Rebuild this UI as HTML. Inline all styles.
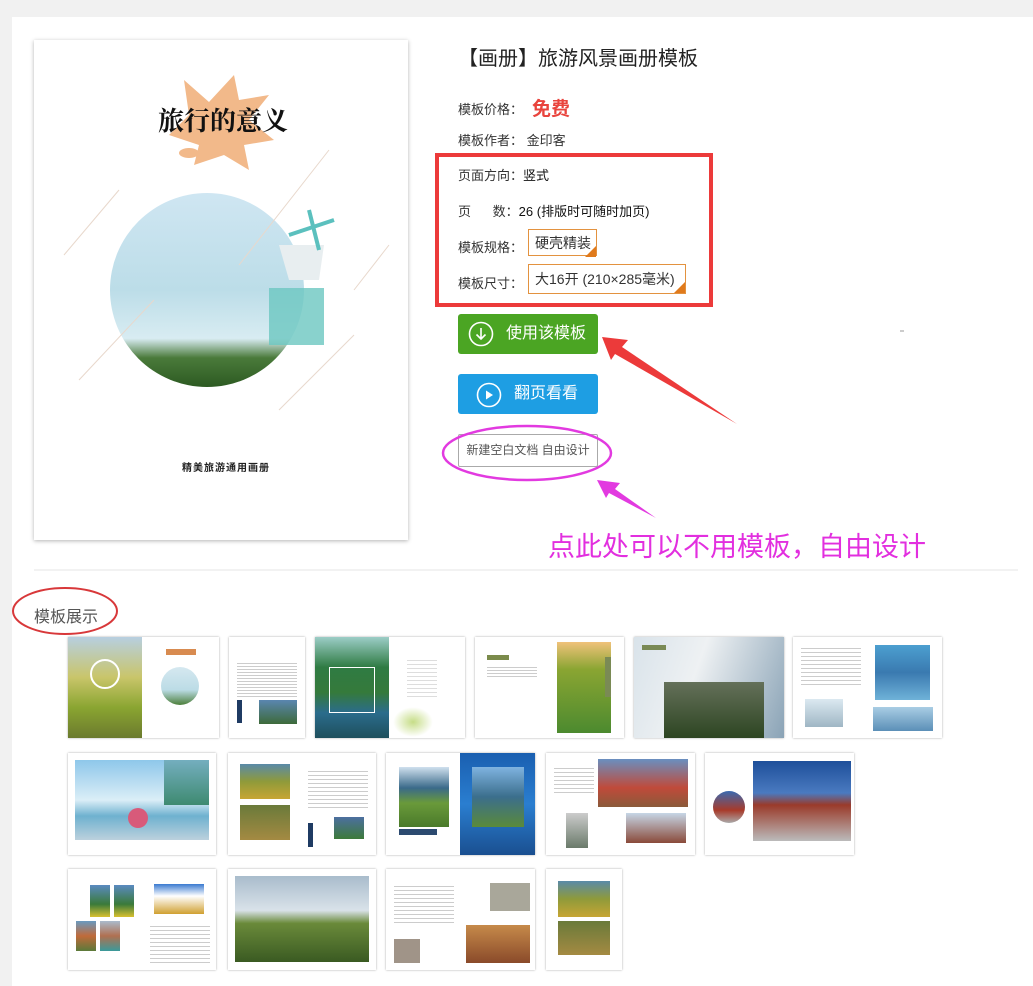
<!DOCTYPE html>
<html><head><meta charset="utf-8"><style>
body{margin:0;width:1033px;height:986px;background:#f1f1f1;font-family:"Liberation Sans","Noto Sans CJK SC",sans-serif;position:relative;overflow:hidden}
.a{position:absolute}
.panel{left:12px;top:17px;width:1021px;height:969px;background:#fff}
.lab{font-size:13px;color:#333}
.t{position:absolute;box-shadow:0 0 2px rgba(0,0,0,.35);background:#fff;overflow:hidden}
.t div{position:absolute}
</style></head><body>
<div class="a panel"></div>
<!-- cover -->
<div class="a" style="left:34px;top:40px;width:374px;height:500px;background:#fff;box-shadow:0 1px 4px rgba(0,0,0,.3)"></div>
<svg class="a" style="left:34px;top:40px" width="374" height="500">
<defs><linearGradient id="cg" x1="0" y1="0" x2="0" y2="1"><stop offset="0" stop-color="#cfe6f2"/><stop offset=".5" stop-color="#bcdde8"/><stop offset=".75" stop-color="#d8ecf2"/><stop offset=".85" stop-color="#4a7a3a"/><stop offset="1" stop-color="#2d5a22"/></linearGradient></defs>
<path d="M150 40 L175 62 L200 35 L205 60 L235 55 L215 80 L240 100 L210 105 L215 130 L190 115 L160 125 L165 105 L135 95 L155 75Z" fill="#f2b98a"/>
<ellipse cx="155" cy="113" rx="10" ry="5" fill="#f2b98a"/>
<circle cx="173" cy="250" r="97" fill="url(#cg)"/>
<path d="M245 205 L255 240 L285 240 L290 205Z" fill="#e8eef0"/>
<path d="M235 248 L290 248 L290 305 L235 305Z" fill="#6cc7c0" opacity=".8"/>
<path d="M255 195 L300 180 M275 170 L285 210" stroke="#5bc0be" stroke-width="4"/>
<g stroke="#e8d8cc" stroke-width="1"><line x1="30" y1="215" x2="85" y2="150"/><line x1="45" y1="340" x2="120" y2="260"/><line x1="205" y1="225" x2="295" y2="110"/><line x1="245" y1="370" x2="320" y2="295"/><line x1="320" y1="250" x2="355" y2="205"/></g>
<text x="124" y="90" font-family="Liberation Serif,Noto Serif CJK SC,serif" font-weight="bold" font-size="26" fill="#111">旅行的意义</text>
<text x="148" y="431" font-size="10" font-weight="bold" fill="#222" letter-spacing="1">精美旅游通用画册</text>
</svg>
<!-- info -->
<div class="a" style="left:458px;top:42px;font-size:20px;color:#222">【画册】旅游风景画册模板</div>
<div class="a lab" style="left:458px;top:99px">模板价格：</div>
<div class="a" style="left:532px;top:94px;font-size:19px;font-weight:bold;color:#e9443d">免费</div>
<div class="a lab" style="left:458px;top:130px">模板作者： 金印客</div>
<div class="a" style="left:435px;top:153px;width:270px;height:146px;border:4px solid #ec3a3a"></div>
<div class="a lab" style="left:458px;top:165px">页面方向：<span style="color:#111">竖式</span></div>
<div class="a lab" style="left:458px;top:201px">页&nbsp;&nbsp;&nbsp;&nbsp;&nbsp;&nbsp;数：<span style="color:#111">26 (排版时可随时加页)</span></div>
<div class="a lab" style="left:458px;top:237px">模板规格：</div>
<div class="a" style="left:528px;top:229px;height:27px;border:1px solid #e3923f;font-size:14px;line-height:27px;padding-left:6px;color:#333;box-sizing:border-box;width:69px">硬壳精装</div>
<div class="a" style="left:585px;top:246px;width:0;height:0;border-left:11px solid transparent;border-bottom:11px solid #e07a1c"></div>
<div class="a lab" style="left:458px;top:273px">模板尺寸：</div>
<div class="a" style="left:528px;top:264px;width:158px;height:30px;border:1px solid #e3923f;box-sizing:border-box;font-size:14px;line-height:29px;padding-left:6px;color:#333;white-space:nowrap;overflow:hidden">大16开 (210×285毫米)</div>
<div class="a" style="left:674px;top:282px;width:0;height:0;border-left:11px solid transparent;border-bottom:11px solid #e07a1c"></div>
<!-- buttons -->
<div class="a" style="left:458px;top:314px;width:140px;height:40px;background:#4ba523;border-radius:3px;color:#fff;font-size:16px;line-height:40px"><svg class="a" style="left:10px;top:7px" width="26" height="26"><circle cx="13" cy="13" r="11.5" fill="none" stroke="#fff" stroke-width="1.6"/><path d="M13 7v11M8.5 13.5l4.5 4.5 4.5-4.5" fill="none" stroke="#fff" stroke-width="1.6"/></svg><span class="a" style="left:48px">使用该模板</span></div>
<div class="a" style="left:458px;top:374px;width:140px;height:40px;background:#1e9ee3;border-radius:3px;color:#fff;font-size:16px;line-height:40px"><svg class="a" style="left:18px;top:8px" width="26" height="26"><circle cx="13" cy="13" r="11.5" fill="none" stroke="#fff" stroke-width="1.6"/><path d="M10 8.5v9l7-4.5z" fill="#fff"/></svg><span class="a" style="left:56px">翻页看看</span></div>
<div class="a" style="left:458px;top:434px;width:140px;height:33px;border:1px solid #aaa;border-radius:2px;box-sizing:border-box;font-size:12px;color:#555;line-height:31px;text-align:center">新建空白文档 自由设计</div>
<svg class="a" style="left:0;top:0" width="1033" height="986">
<ellipse cx="527" cy="453" rx="84" ry="27" fill="none" stroke="#e23ae0" stroke-width="2.5"/>
<path d="M602 337 L628 340 L622 347 L737 424 L615 354 L611 360 Z" fill="#ec3a3a"/>
<path d="M597 480 L620 483 L615 489 L656 518 L609 493 L606 498 Z" fill="#e23ae0"/>
<ellipse cx="65" cy="611" rx="52" ry="23" fill="none" stroke="#d8383a" stroke-width="2"/>
<line x1="34" y1="570" x2="1018" y2="570" stroke="#e6e6e6"/>
<line x1="900" y1="331" x2="904" y2="331" stroke="#999"/>
</svg>
<div class="a" style="left:548px;top:525px;font-size:27px;color:#e22fdf">点此处可以不用模板，自由设计</div>
<div class="a" style="left:34px;top:603px;font-size:16px;color:#555">模板展示</div>
<!-- thumbnails row1 -->
<div class="t" style="left:68px;top:637px;width:151px;height:101px"><div style="left:0;top:0;width:74px;height:101px;background:linear-gradient(#b7cfe0,#c9c56a 40%,#8aa531 70%,#6b7a2e)"></div><div style="left:22px;top:22px;width:26px;height:26px;border:2px solid #fff;border-radius:50%"></div><div style="left:93px;top:30px;width:38px;height:38px;border-radius:50%;background:linear-gradient(#d5e8f0,#bcdce6 60%,#4c7f3a)"></div><div style="left:98px;top:12px;width:30px;height:6px;background:#d88b50"></div></div>
<div class="t" style="left:229px;top:637px;width:76px;height:101px"><div style="left:8px;top:24px;width:60px;height:38px;background:repeating-linear-gradient(#fff 0 2px,#ccc 2px 3px)"></div><div style="left:30px;top:63px;width:38px;height:24px;background:linear-gradient(#5a86b0,#3d6a3a)"></div><div style="left:8px;top:63px;width:5px;height:23px;background:#1f3b63"></div></div>
<div class="t" style="left:315px;top:637px;width:150px;height:101px"><div style="left:0;top:0;width:74px;height:101px;background:linear-gradient(#9ccdc7,#2f7b43 30%,#357a3b 55%,#2b6c8c 75%,#1e4f5c)"></div><div style="left:14px;top:30px;width:44px;height:44px;border:1px solid #fff"></div><div style="left:92px;top:20px;width:30px;height:40px;background:repeating-linear-gradient(#fff 0 3px,#ddd 3px 4px)"></div><div style="left:78px;top:70px;width:40px;height:30px;background:radial-gradient(#c6dd87,transparent 70%)"></div></div>
<div class="t" style="left:475px;top:637px;width:149px;height:101px"><div style="left:82px;top:5px;width:54px;height:91px;background:linear-gradient(#f0c27a,#8aa532 30%,#4c8a2f)"></div><div style="left:130px;top:20px;width:6px;height:40px;background:#7a8a55"></div><div style="left:12px;top:18px;width:22px;height:5px;background:#7b8b4b"></div><div style="left:12px;top:28px;width:50px;height:14px;background:repeating-linear-gradient(#fff 0 2px,#ccc 2px 3px)"></div></div>
<div class="t" style="left:634px;top:637px;width:150px;height:101px"><div style="left:0;top:0;width:150px;height:101px;background:linear-gradient(110deg,#d9e3ea,#eef1f3 40%,#8aa3b6)"></div><div style="left:30px;top:45px;width:100px;height:56px;background:linear-gradient(#64705a,#2d4522)"></div><div style="left:8px;top:8px;width:24px;height:5px;background:#7a8a55"></div></div>
<div class="t" style="left:793px;top:637px;width:149px;height:101px"><div style="left:8px;top:8px;width:60px;height:40px;background:repeating-linear-gradient(#fff 0 3px,#ccc 3px 4px)"></div><div style="left:82px;top:8px;width:55px;height:55px;background:linear-gradient(#4c9fd0,#3a7ab0 50%,#6fb2d8)"></div><div style="left:80px;top:70px;width:60px;height:24px;background:linear-gradient(#a9cde4,#5b8fb7)"></div><div style="left:12px;top:62px;width:38px;height:28px;background:linear-gradient(#dbe9f1,#9fb6c4)"></div></div>
<!-- row2 -->
<div class="t" style="left:68px;top:753px;width:148px;height:102px"><div style="left:7px;top:7px;width:134px;height:80px;background:linear-gradient(#8ec7ea,#dbeef7 50%,#6eb1cf 70%,#bcd1dd)"></div><div style="left:96px;top:7px;width:45px;height:45px;background:linear-gradient(#74aebf,#3e8a70)"></div><div style="left:60px;top:55px;width:20px;height:20px;background:#d85a7a;border-radius:50%"></div></div>
<div class="t" style="left:228px;top:753px;width:148px;height:102px"><div style="left:12px;top:11px;width:50px;height:35px;background:linear-gradient(#5a8aa8,#8f9a3a 50%,#c7a534)"></div><div style="left:12px;top:52px;width:50px;height:35px;background:linear-gradient(#6a7a3a,#a48a42)"></div><div style="left:80px;top:15px;width:60px;height:40px;background:repeating-linear-gradient(#fff 0 3px,#ccc 3px 4px)"></div><div style="left:106px;top:64px;width:30px;height:22px;background:linear-gradient(#4c6fa0,#3d7a3a)"></div><div style="left:80px;top:70px;width:5px;height:24px;background:#1f3b63"></div></div>
<div class="t" style="left:386px;top:753px;width:149px;height:102px"><div style="left:74px;top:0;width:75px;height:102px;background:linear-gradient(#1a5fb0,#2a7ed0 50%,#1a4f90)"></div><div style="left:86px;top:14px;width:52px;height:60px;background:linear-gradient(#7fb3e0,#3b6e8c 50%,#5a8a3a)"></div><div style="left:13px;top:14px;width:50px;height:60px;background:linear-gradient(#cfe0ee,#3a6a8a 35%,#6a9a3a 60%,#4a7a2a)"></div><div style="left:13px;top:76px;width:38px;height:6px;background:#2c4a70"></div></div>
<div class="t" style="left:546px;top:753px;width:149px;height:102px"><div style="left:52px;top:6px;width:90px;height:48px;background:linear-gradient(#6a8fc0,#c04a3a 60%,#8a5a3a)"></div><div style="left:20px;top:60px;width:22px;height:35px;background:linear-gradient(#ccc,#6a7a6a)"></div><div style="left:80px;top:60px;width:60px;height:30px;background:linear-gradient(#c6d6e6,#8a4a3a)"></div><div style="left:8px;top:12px;width:40px;height:30px;background:repeating-linear-gradient(#fff 0 3px,#ccc 3px 4px)"></div></div>
<div class="t" style="left:705px;top:753px;width:149px;height:102px"><div style="left:48px;top:8px;width:98px;height:80px;background:linear-gradient(#1e4f9a,#4a7ac0 40%,#9a3a2a 55%,#bbb)"></div><div style="left:8px;top:38px;width:32px;height:32px;border-radius:50%;background:linear-gradient(#3a6ab0,#a83a2a 60%,#aaa)"></div></div>
<!-- row3 -->
<div class="t" style="left:68px;top:869px;width:148px;height:101px"><div style="left:22px;top:16px;width:20px;height:32px;background:linear-gradient(#5a8ac0,#3a7a3a 60%,#d8c030)"></div><div style="left:46px;top:16px;width:20px;height:32px;background:linear-gradient(#5a8ac0,#3a7a3a 60%,#d8c030)"></div><div style="left:8px;top:52px;width:20px;height:30px;background:linear-gradient(#6a9ac0,#c06a3a 50%,#5a7a3a)"></div><div style="left:32px;top:52px;width:20px;height:30px;background:linear-gradient(#aabbcc,#b07050 50%,#3a9a9a)"></div><div style="left:86px;top:15px;width:50px;height:30px;background:linear-gradient(#3a7ad0,#fff 40%,#d0a030)"></div><div style="left:82px;top:54px;width:60px;height:40px;background:repeating-linear-gradient(#fff 0 3px,#ccc 3px 4px)"></div></div>
<div class="t" style="left:228px;top:869px;width:148px;height:101px"><div style="left:7px;top:7px;width:134px;height:86px;background:linear-gradient(#a9bccc,#d9e2e9 40%,#6a8a3a 55%,#3a5a22)"></div></div>
<div class="t" style="left:386px;top:869px;width:149px;height:101px"><div style="left:8px;top:14px;width:60px;height:40px;background:repeating-linear-gradient(#fff 0 3px,#ccc 3px 4px)"></div><div style="left:104px;top:14px;width:40px;height:28px;background:#a9a79a"></div><div style="left:80px;top:56px;width:64px;height:38px;background:linear-gradient(#c68a4a,#8a4a2a)"></div><div style="left:8px;top:70px;width:26px;height:24px;background:#a09488"></div></div>
<div class="t" style="left:546px;top:869px;width:76px;height:101px"><div style="left:12px;top:12px;width:52px;height:36px;background:linear-gradient(#5a8aa8,#8f9a3a 50%,#c7a534)"></div><div style="left:12px;top:52px;width:52px;height:34px;background:linear-gradient(#6a7a3a,#a48a42)"></div></div>
</body></html>
